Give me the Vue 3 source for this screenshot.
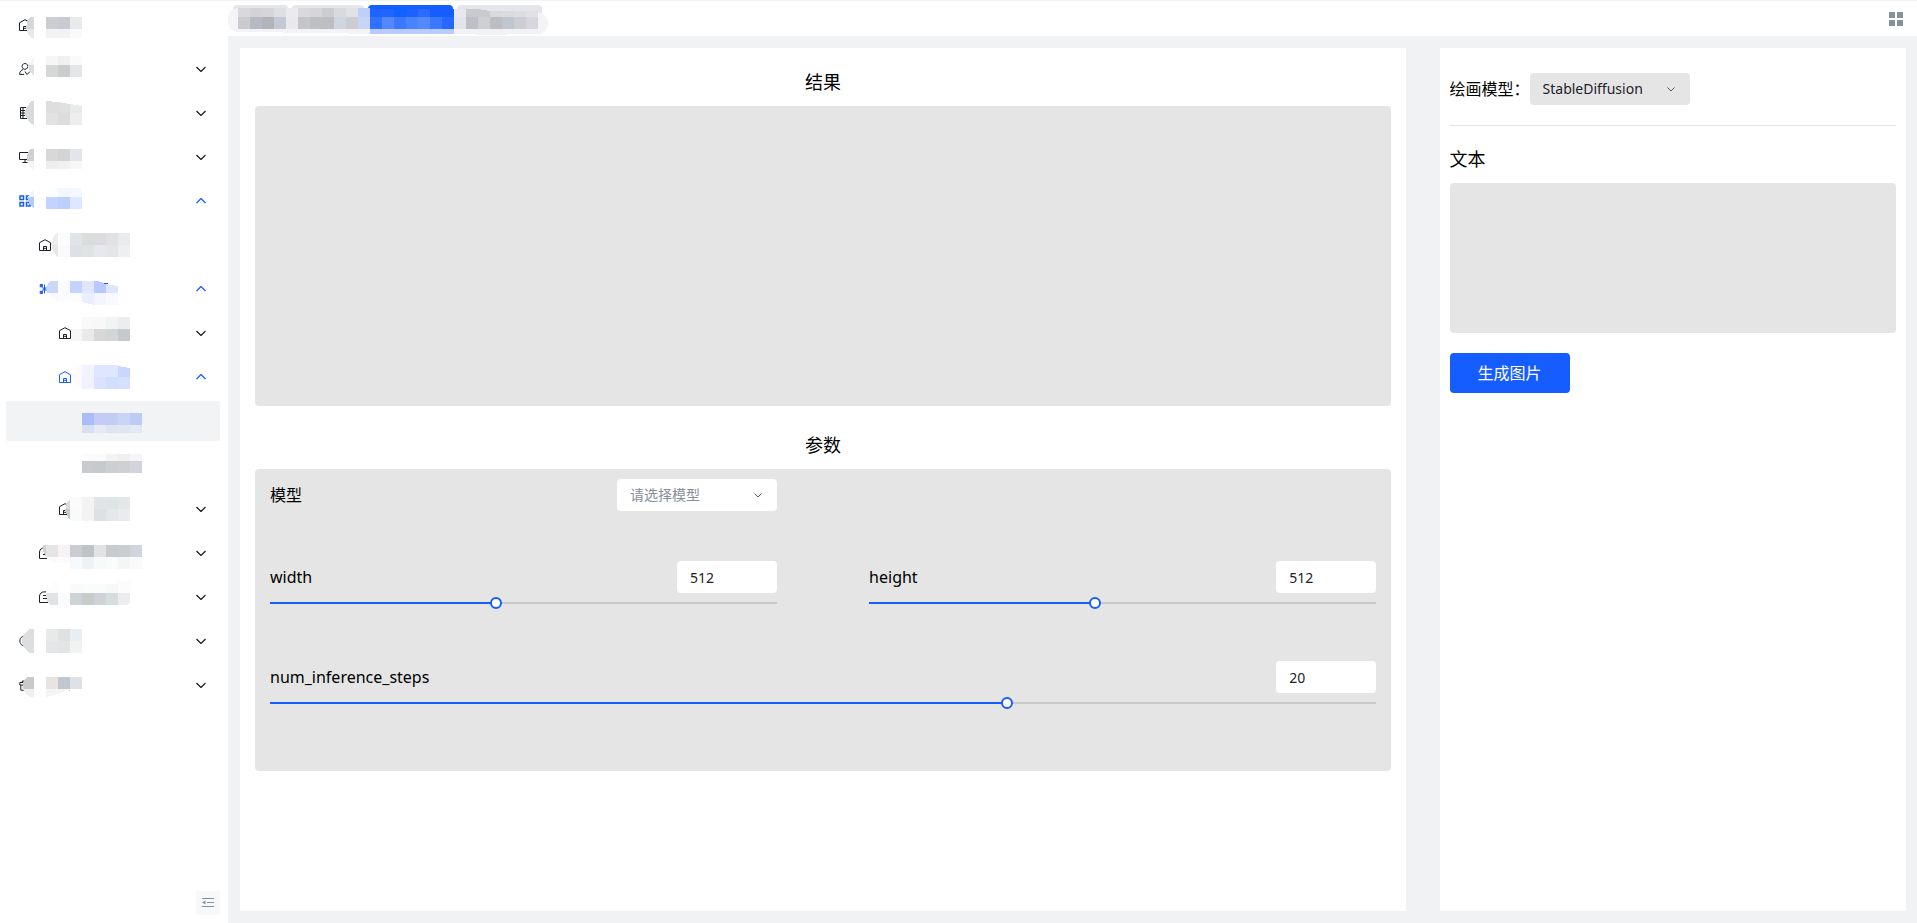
<script setup>
import { ref } from 'vue'

const row = (x, y, h, colors) =>
  colors.split(' ').map((c, i) => ({ d: `M${x + i * 12} ${y}h12v${h}h-12z`, c: '#' + c }))
const p = (d, c) => ({ d, c: '#' + c })

const menu = [
  { icon: 'home', level: 0, mask: [
    ...row(46, 12, 12, 'cccdd0 c9cbd1 e8e9ed'), ...row(46, 24, 9, 'f3f3f4 f2f3f6 fafafb'),
    p('M34 12h-4q-4 5 -4 12h8z', 'd6d7d8'), p('M26 24q2 7 6 9h2v-9z', 'e8e8e8') ] },
  { icon: 'user', level: 0, arrow: 'down', mask: [
    ...row(46, 7, 9, 'f6f6f6 f0f0f0 fafafb'), ...row(46, 16, 12, 'd6d8d7 cbcccd e2e6e9'),
    p('M34 9q-4 2 -6 7h6z', 'f2f5fa'), p('M28 16q1 7 6 10v-10z', 'd9dee3') ] },
  { icon: 'server', level: 0, arrow: 'down', mask: [
    p('M46 8l12 1v11h-12z', 'dddedd'), p('M58 9l12 2v9h-12z', 'dedfdf'), p('M70 11l12 2v7h-12z', 'e8e9ea'),
    ...row(46, 20, 12, 'e1e2e1 dcdddf ededee'), p('M34 8h-2q-14 12 0 23l2 1z', 'd9dadb') ] },
  { icon: 'desktop', level: 0, arrow: 'down', mask: [
    ...row(46, 12, 12, 'd8d8d9 d3d4d6 e4e5ea'), ...row(46, 24, 8, 'eeeeef f1f1f1 f7f7f8'),
    p('M34 12h-4q-4 6 -3 12h7z', 'd0d0d0'), p('M27 24q2 7 7 9v-9z', 'f4f4f4') ] },
  { icon: 'apps', level: 0, arrow: 'up', blue: true, mask: [
    ...row(46, 7, 9, 'fbfdff f1f6ff f3f9ff'), ...row(46, 16, 12, 'c3d3ff bccfff dde7ff'),
    p('M34 9q-4 2 -6 7h6z', 'f0f4ff'), p('M28 16q0 8 6 11v-11z', 'b3caff') ] },
  { icon: 'home', level: 1, mask: [
    p('M58 8q-5 1 -7 12h7z', 'ededec'), p('M51 20q3 9 7 12v-12z', 'e6e8e7'),
    ...row(58, 8, 12, 'fcfcfb e1e5e9 dbdcdc dcdce0 e1e3e3 e8ecef'),
    ...row(58, 20, 12, 'fafafa dde1e4 e0e3e3 e5e9ed e4e5e6 eeeff1') ] },
  { icon: 'branch', level: 1, arrow: 'up', blue: true, mask: [
    p('M58 12h-8q-4 3 -3 12h11z', 'cdd8f6'), p('M48 24q3 6 10 8v-8z', 'f7f9ff'),
    ...row(58, 12, 12, 'fafbff c4d2ff e1e6ff'), p('M94 12h4l8 3v9h-12z', 'b7c9ff'), p('M106 15l12 2v7h-12z', 'dbe6ff'),
    ...row(58, 24, 8, 'fbfcff fbfcff'), p('M82 24h12v12l-12 -3z', 'e9efff'), ...row(94, 24, 12, 'f3f6ff f8faff'),
    p('M103 14h5v1h-3z', '165dff') ] },
  { icon: 'home', level: 2, arrow: 'down', mask: [
    ...row(82, 4, 12, 'f9f9f9 f8f8f8 f2f3f3 ebedee'), ...row(71, 16, 12, 'f6f6f6'), ...row(82, 16, 12, 'eaeae9 d6d7d6 d2d6d8 c5c9cd') ] },
  { icon: 'home', level: 2, arrow: 'up', blue: true, mask: [
    p('M82 8q-8 2 -10 12q2 8 10 12z', 'fbfbff'), ...row(82, 8, 12, 'f2f3ff e0e6ff dee7ff'), p('M118 9l12 2v9h-12z', 'c9d7ff'),
    ...row(82, 20, 12, 'f1f1ff dae2ff d0deff d6dffe') ] },
  { level: 3, active: true, blue: true, mask: [
    ...row(82, 12, 12, 'a9bdf8 c4cbf6 c2cdf3 c9d5f5 bdcbf7'), ...row(82, 24, 8, 'd9e0f4 e6eaf5 dfe3f2 e0e5f4 e3e8f4') ] },
  { level: 3, mask: [
    ...row(82, 9, 7, 'fafbfa fafbfb f3f3f4 f0f0f0 f5f5f6'), ...row(82, 16, 12, 'c9cacf c8c9cc cccfd1 cfd0d2 d1d4da') ] },
  { icon: 'home', level: 2, arrow: 'down', mask: [
    p('M70 10l-4 4v6h4z', 'd9dadd'), p('M65 20q1 7 5 10v-10z', 'c8c9cc'),
    ...row(70, 8, 12, 'fbfbfb f4f3f2 e2e5e7 dfe4e5 e4e6e7'), ...row(70, 20, 12, 'f9fbfa f3f3f4 dfe0e2 e6e7e8 eaebec') ] },
  { icon: 'robot', level: 1, arrow: 'down', mask: [
    p('M46 12h-3v6l3 6z', 'd2d2d2'), ...row(46, 12, 12, 'e5e5e5 f7f3f5 cbccd2 c0c3c6 e1e2e3 c9cacc c9cdd0 d1d5db'),
    p('M46 24h12v6q-9 -1 -12 -6z', 'fafafa'), ...row(58, 24, 6, 'fcfcfc'),
    ...row(70, 24, 12, 'f7fafd eef2f5 f8fafa fafbfb f3f5f7 fafafa') ] },
  { icon: 'robot', level: 1, arrow: 'down', mask: [
    p('M58 4q-12 4 -12 12h12z', 'fcfcfc'), ...row(70, 7, 9, 'fafafa fafbfb fafbfb f6f8fa'), p('M118 4h12v12h-12z', 'fcfcfc'),
    p('M46 16h12v12h-8q-4 -3 -4 -12z', 'e2e3e5'), ...row(58, 16, 12, 'fafbfb cdd4d6 c7cbca d1d2d7 d7dcdd'),
    p('M118 16h12v10l-3 2h-9z', 'ececef') ] },
  { icon: 'circle', level: 0, arrow: 'down', mask: [
    ...row(46, 8, 12, 'e8eaea e0e1e3 e9eef3'), ...row(46, 20, 12, 'e4e6e8 e3e4e6 f1f3f3'),
    p('M34 8h-4q-17 12 0 24h4z', 'dddedf') ] },
  { icon: 'gift', level: 0, arrow: 'down', mask: [
    ...row(46, 12, 12, 'e8e4e1 bfc8d1 dee2e6'), p('M46 24h24l-12 5l-12 3z', 'f5f5f5'), p('M69 25h1v1h-1z', 'd8b98c'),
    p('M34 12h-7q-5 5 -4 12h11z', 'cacaca'), p('M23 24q3 7 11 9v-9z', 'f0f0f0') ] }
]

const tabs = ['one', 'two', 'three', 'four']
const activeTab = ref(2)
const tabMask = [
  p('M238 8q-10 1 -10 12q0 11 10 12z', 'f4f4f7'),
  ...row(238, 8, 9, 'd9d9dc d2d2d7 d6d6da dedfe3 ebebef d9d9db d6d6da cbcccf d9dadd e1e2e5 bdd0fb'),
  ...row(370, 9, 8, '1e65ff 1f65ff 1260ff 1b62ff 2a6cff 165dff 165dff'),
  ...row(454, 9, 8, 'e8e7ed c8cacd'), p('M478 9l12 2v6h-12z', 'c9cacd'), ...row(490, 11, 6, 'd9d9dc dbdbdf dddde1 e0e0e5'),
  ...row(238, 17, 12, 'cbcbcf b6bac3 b1b4b8 c5c9d4 e9e9ed c4c5c8 bebfc3 bdbec2 d0d6df cbccd4 c8d6f6 2f70ff 5488ff 3a78ff 4a83ff 5289ff 3a78ff 2668ff e5e4ea bec0c5 cecfd3 bdbec2 c0c6cd cdced3 d6d6dc'),
  p('M234 29h136v5h-20l-5 -1h-60l-4 -1h-44z', 'f3f3f5'), p('M370 29h84v5h-84z', 'b9cbff'),
  p('M454 29h84v5l-60 1l-4 -1h-20z', 'f2f2f4'), p('M538 12q10 2 10 12q-1 9 -10 11z', 'f4f4f6')
]

const paths = {
  home: 'M.5 3.700 6 .7l5.500 3V11.500H.5zM4.500 11V7.500h3V11M4.500 9.300h3',
  user: 'M6 6.300a2.900 2.900 0 1 0-.1 0M.6 11.400C.6 8.500 2.400 7 4.200 6.500M.6 11.400h4.500M6 8.500l2 3 3-3',
  server: 'M1.500 .5h9.500v11H1.500zM1 3.500h10M1 6h10M1 8.500h10M4 1v10',
  desktop: 'M.5 1.500h11v7H.5zM6 8.500v2.500M3.500 11.500h5',
  apps: 'M1 1h3.500v3.500H1zM7.500 1h3.500v3.500H7.500zM1 7.500h3.500v3.500H1zM7.500 7.500h3.500v3.500H7.500z',
  branch: 'M1.200 1.500h2.300v2.300H1.200zM1.200 8.200h2.300v2.300H1.200zM1.700 2h1.300v1.300H1.700zM1.700 8.700h1.300v1.300H1.700zM3.500 4l4 4M3.500 8l4-4M5.500 1.500v9M3.500 6h4',
  robot: 'M.5 11.500V5Q1 .8 6 .8T11.500 5v6.500zM4 4.500h4M4 7.500h4',
  circle: 'M6 .8a5.200 5.200 0 1 0 .1 0',
  gift: 'M.8 3.500h10.400v2.500H.8zM1.800 6v5.200h8.400V6M3 3.500Q2.500 1 6 2.200M4.500 6v5'
}

const drawModel = ref('StableDiffusion')
const model = ref('')
const prompt = ref('')
const params = ref([
  { name: 'width', min: 100, max: 1024, value: 512 },
  { name: 'height', min: 100, max: 1024, value: 512 },
  { name: 'num_inference_steps', min: 0, max: 30, value: 20, wide: true }
])
const fill = (s) => ((s.value - s.min) / (s.max - s.min)) * 100 + '%'
</script>

<template>
  <div class="app">
    <nav class="sidebar">
      <ul class="menu">
        <li v-for="(m, i) in menu" :key="i">
          <button type="button" class="item" :class="['level' + m.level, { active: m.active, blue: m.blue }]" :aria-label="'菜单 ' + (i + 1)">
            <svg v-if="m.icon" class="icon" :class="m.icon" viewBox="0 0 12 12"><path :d="paths[m.icon]" /></svg>
            <svg v-if="m.arrow" class="arrow" viewBox="0 0 10 6"><path :d="m.arrow === 'down' ? 'M.5 1 5 5.500 9.500 1' : 'M.5 5 5 .5l4.500 4.500'" /></svg>
            <svg class="mask" viewBox="6 0 154 40" aria-hidden="true"><path v-for="(c, k) in m.mask" :key="k" :d="c.d" :fill="c.c" /></svg>
          </button>
        </li>
      </ul>
      <button type="button" class="collapse" aria-label="收起菜单">
        <svg viewBox="0 0 12 12"><path d="M0 1.500h12M5 5.500h7M0 9.500h12" /><path class="tri" d="M0 5.500l3.500-2v4z" /></svg>
      </button>
    </nav>

    <div class="page">
      <header class="topbar">
        <div class="tabs">
          <button v-for="(t, i) in tabs" :key="t" type="button" class="tab" :class="[t, { on: i === activeTab }]" :aria-label="'标签 ' + (i + 1)" @click="activeTab = i"></button>
          <svg class="tabmask" viewBox="228 1 322 35" aria-hidden="true"><path v-for="(c, k) in tabMask" :key="k" :d="c.d" :fill="c.c" /></svg>
        </div>
        <button type="button" class="grid-btn" aria-label="应用">
          <svg viewBox="0 0 14 14"><path d="M0 0h6v6H0zM8 0h6v6H8zM0 8h6v6H0zM8 8h6v6H8z" /></svg>
        </button>
      </header>

      <main class="content">
        <section class="card work">
          <h2 class="title">结果</h2>
          <div class="result"></div>
          <h2 class="title gap">参数</h2>
          <div class="params">
            <div class="param model">
              <div class="head">
                <label for="model">模型</label>
                <span class="select white">
                  <select id="model" v-model="model" :class="{ empty: !model }">
                    <option value="" disabled>请选择模型</option>
                  </select>
                  <svg viewBox="0 0 8 5"><path d="M.5.5 4 4 7.500.5" /></svg>
                </span>
              </div>
            </div>
            <div v-for="s in params" :key="s.name" class="param" :class="{ wide: s.wide }">
              <div class="head">
                <label :for="s.name">{{ s.name }}</label>
                <input :id="s.name" v-model.number="s.value" class="number" type="text">
              </div>
              <input v-model.number="s.value" class="range" type="range" :min="s.min" :max="s.max" :aria-label="s.name" :style="{ '--fill': fill(s) }">
            </div>
          </div>
        </section>

        <aside class="card side">
          <div class="pick">
            <label for="draw">绘画模型：</label>
            <span class="select">
              <select id="draw" v-model="drawModel"><option>StableDiffusion</option></select>
              <svg viewBox="0 0 8 5"><path d="M.5.5 4 4 7.500.5" /></svg>
            </span>
          </div>
          <label class="title left" for="prompt">文本</label>
          <textarea id="prompt" v-model="prompt" class="prompt"></textarea>
          <button type="button" class="go">生成图片</button>
        </aside>
      </main>
    </div>
  </div>
</template>

<style>
body { margin: 0; background: #fff; }
</style>

<style scoped>
* { box-sizing: border-box; }
button, input, select, textarea { font: inherit; border: 0; margin: 0; padding: 0; outline: 0; color: inherit; }
button { cursor: pointer; }
svg { display: block; fill: none; }
.app {
  display: flex;
  min-height: 100vh;
  border-top: 1px solid #f2f3f5;
  font: 16px/24px "Noto Sans", "Noto Sans CJK SC", sans-serif;
  color: #000;
}
.sidebar { width: 228px; flex: none; display: flex; flex-direction: column; justify-content: space-between; padding: 4px 8px 8px 6px; }
.menu { list-style: none; margin: 0; padding: 0; display: flex; flex-direction: column; gap: 4px; }
.item { position: relative; display: flex; align-items: center; width: 100%; height: 40px; padding: 0 14px 0 13px; background: none; border-radius: 2px; color: #1d2129; }
.item.level1 { padding-left: 33px; }
.item.level2 { padding-left: 53px; }
.item.active { background: #f2f3f5; }
.item.blue { color: #165dff; }
.icon { width: 12px; height: 12px; stroke: currentColor; stroke-width: 1; }
.icon.apps { stroke-width: 1.5; }
.arrow { width: 10px; height: 6px; margin-left: auto; stroke: currentColor; stroke-width: 1.3; }
.mask { position: absolute; left: 0; top: 0; width: 154px; height: 40px; shape-rendering: crispEdges; }
.collapse { align-self: flex-end; width: 24px; height: 24px; padding: 6px; border-radius: 2px; background: #f7f8fa; }
.collapse path { stroke: #86909c; }
.collapse .tri { fill: #86909c; stroke: none; }
.page { flex: 1; min-width: 0; display: flex; flex-direction: column; }
.topbar { display: flex; justify-content: space-between; height: 35px; padding-right: 14px; background: #fff; }
.tabs { position: relative; display: flex; gap: 4px; padding: 4px 8px 6px 5px; }
.tab { border-radius: 4px 4px 0 0; background: #e5e6eb; }
.tab.one { width: 55px; }
.tab.two { width: 72px; }
.tab.three, .tab.four { width: 85px; }
.tab.on { background: #165dff; }
.tabmask { position: absolute; left: 0; top: 0; width: 322px; height: 35px; shape-rendering: crispEdges; pointer-events: none; }
.grid-btn { align-self: center; width: 14px; height: 14px; background: none; }
.grid-btn path { fill: #86909c; }
.content { flex: 1; display: flex; justify-content: space-between; padding: 12px 11px 12px 12px; background: #f1f2f4; }
.card { background: #fff; }
.work { width: 70%; padding: 10px 15px; }
.side { width: 28%; padding: 25px 10px; }
.title { display: block; margin: 0; font-size: 18px; font-weight: 400; line-height: 48px; text-align: center; }
.title.gap { margin-top: 15px; }
.title.left { margin-top: 9px; text-align: left; }
.result { height: 300px; border-radius: 4px; background: #e5e5e5; }
.params { display: grid; grid-template-columns: 1fr 1fr; column-gap: 92px; padding: 10px 15px; border-radius: 4px; background: #e5e5e5; }
.param { height: 100px; }
.param.model { height: 82px; }
.param.model + .param { grid-column: 1; }
.param.wide { grid-column: 1 / -1; }
.head { display: flex; align-items: center; justify-content: space-between; height: 32px; }
.select { position: relative; width: 160px; height: 32px; }
.select select { appearance: none; width: 100%; height: 32px; padding: 0 32px 0 13px; border-radius: 4px; background: #e5e5e5; font-size: 14px; color: #1d2129; }
.select.white select { background: #fff; }
.select select.empty { color: #86909c; }
.select svg { position: absolute; right: 15px; top: 14px; width: 8px; height: 5px; stroke: #4e5969; pointer-events: none; }
.number { width: 100px; height: 32px; padding: 0 13px; border-radius: 4px; background: #fff; font-size: 14px; color: #1d2129; }
.range {
  appearance: none; display: block; width: calc(100% + 12px); height: 12px; margin: 4px -6px 0;
  background: linear-gradient(to right, #165dff var(--fill), #c9c9c9 var(--fill)) center / calc(100% - 12px) 2px no-repeat;
}
.range::-webkit-slider-thumb { appearance: none; width: 12px; height: 12px; border: 2px solid #165dff; border-radius: 50%; background: #fff; }
.pick { display: flex; align-items: center; padding-bottom: 20px; border-bottom: 1px solid #e5e5e5; }
.prompt { display: block; width: 100%; height: 150px; padding: 8px 12px; border-radius: 4px; background: #e5e5e5; resize: none; }
.go { width: 120px; height: 40px; margin-top: 20px; border-radius: 4px; background: #165dff; color: #fff; }
</style>
